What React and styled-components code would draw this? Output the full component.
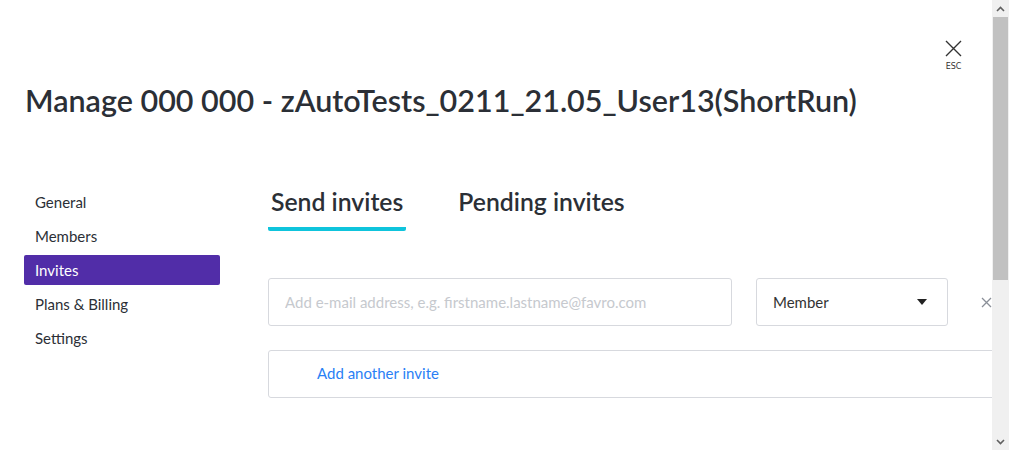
import React from 'react';
import styled, { createGlobalStyle } from 'styled-components';

const GlobalStyle = createGlobalStyle`
    body {
        margin: 0;
        overflow: hidden;
        font-family: Lato, "Open Sans", sans-serif;
        color: #2b2f36;
        background: #ffffff;
    }
`

const Page = styled.div`
    position: relative;
    height: 450px;
    padding: 80px 0 0 25px;
    box-sizing: border-box;
    overflow: hidden;
`

const Close = styled.button`
    position: absolute;
    top: 40px;
    right: 47px;
    display: flex;
    flex-direction: column;
    align-items: center;
    gap: 5px;
    padding: 0;
    border: none;
    background: none;
    cursor: pointer;
    color: #333;
    span {
        font-family: "DejaVu Sans", sans-serif;
        font-size: 8px;
        line-height: 9px;
    }
`

const Title = styled.h1`
    margin: 0;
    font-size: 30.5px;
    line-height: 40px;
    font-weight: 600;
    white-space: nowrap;
`

const Body = styled.div`
    display: flex;
    gap: 48px;
    margin-top: 67px;
`

const Nav = styled.ul`
    list-style: none;
    margin: 0;
    padding: 0;
    width: 196px;
    margin-left: -1px;
    flex-shrink: 0;
`

const NavItem = styled.li`
    height: 30px;
    line-height: 30px;
    padding-left: 11px;
    margin-bottom: 4px;
    border-radius: 2px;
    font-size: 15px;
    color: ${p => p.active ? '#ffffff' : '#2b2f36'};
    background: ${p => p.active ? '#512da8' : 'transparent'};
`

const Main = styled.div`
    width: 760px;
    flex-shrink: 0;
`

const Tabs = styled.div`
    display: flex;
    gap: 49px;
`

const Tab = styled.div`
    padding: 0 3px;
    height: 44px;
    line-height: 30px;
    font-size: 24.75px;
    font-weight: 600;
    box-sizing: border-box;
    border-bottom: 4px solid ${p => p.active ? '#0fc4dc' : 'transparent'};
    border-radius: 0 0 2px 2px;
`

const InviteRow = styled.div`
    display: flex;
    align-items: center;
    margin-top: 47px;
`

const EmailInput = styled.input`
    width: 464px;
    height: 48px;
    box-sizing: border-box;
    border: 1px solid #d7d9de;
    border-radius: 3px;
    padding: 0 16px;
    font-family: Lato, sans-serif;
    font-size: 15px;
    color: #2b2f36;
    &::placeholder {
        color: #c6c9ce;
    }
`

const Select = styled.div`
    width: 192px;
    height: 48px;
    margin-left: 24px;
    box-sizing: border-box;
    border: 1px solid #d7d9de;
    border-radius: 3px;
    padding: 0 20px 1px 16px;
    display: flex;
    align-items: center;
    justify-content: space-between;
    font-size: 15px;
    color: #333;
`

const Caret = styled.span`
    width: 0;
    height: 0;
    border-left: 5px solid transparent;
    border-right: 5px solid transparent;
    border-top: 6px solid #222;
`

const Remove = styled.button`
    margin-left: 33px;
    padding: 0;
    border: none;
    background: none;
    display: flex;
    cursor: pointer;
`

const AddBox = styled.div`
    margin-top: 24px;
    height: 48px;
    box-sizing: border-box;
    border: 1px solid #d7d9de;
    border-radius: 3px;
    padding: 0 0 2px 48px;
    display: flex;
    align-items: center;
    font-size: 15px;
    color: #2a7ff5;
`

const Scrollbar = styled.div`
    position: fixed;
    top: 0;
    right: 0;
    width: 17px;
    height: 100vh;
    background: #f0f0f0;
    display: flex;
    flex-direction: column;
    align-items: center;
`

const ScrollArrow = styled.div`
    height: 17px;
    width: 17px;
    display: flex;
    align-items: center;
    justify-content: center;
    flex-shrink: 0;
`

const Thumb = styled.div`
    width: 15px;
    height: 263px;
    background: #c1c1c1;
`

const Track = styled.div`
    flex: 1;
`

const App = () => {
    const navItems = ['General', 'Members', 'Invites', 'Plans & Billing', 'Settings']
        .map(name => <NavItem key={name} active={name === 'Invites'}>{name}</NavItem>)

    return (
        <Page>
            <GlobalStyle />
            <Close>
                <svg width="17" height="17" viewBox="0 0 17 17">
                    <path d="M1 1 L16 16 M16 1 L1 16" stroke="#333" strokeWidth="1.4" fill="none" />
                </svg>
                <span>ESC</span>
            </Close>
            <Title>Manage 000 000 - zAutoTests_0211_21.05_User13(ShortRun)</Title>
            <Body>
                <Nav>{navItems}</Nav>
                <Main>
                    <Tabs>
                        <Tab active>Send invites</Tab>
                        <Tab>Pending invites</Tab>
                    </Tabs>
                    <InviteRow>
                        <EmailInput placeholder="Add e-mail address, e.g. firstname.lastname@favro.com" />
                        <Select>
                            Member
                            <Caret />
                        </Select>
                        <Remove>
                            <svg width="11" height="11" viewBox="0 0 11 11">
                                <path d="M1 1 L10 10 M10 1 L1 10" stroke="#8a8f98" strokeWidth="1.3" fill="none" />
                            </svg>
                        </Remove>
                    </InviteRow>
                    <AddBox>Add another invite</AddBox>
                </Main>
            </Body>
            <Scrollbar>
                <ScrollArrow>
                    <svg width="9" height="6" viewBox="0 0 9 6">
                        <path d="M1 5 L4.5 1.5 L8 5" stroke="#606060" strokeWidth="1.6" fill="none" />
                    </svg>
                </ScrollArrow>
                <Thumb />
                <Track />
                <ScrollArrow>
                    <svg width="9" height="6" viewBox="0 0 9 6">
                        <path d="M1 1 L4.5 4.5 L8 1" stroke="#606060" strokeWidth="1.6" fill="none" />
                    </svg>
                </ScrollArrow>
            </Scrollbar>
        </Page>
    );
}

export default App
